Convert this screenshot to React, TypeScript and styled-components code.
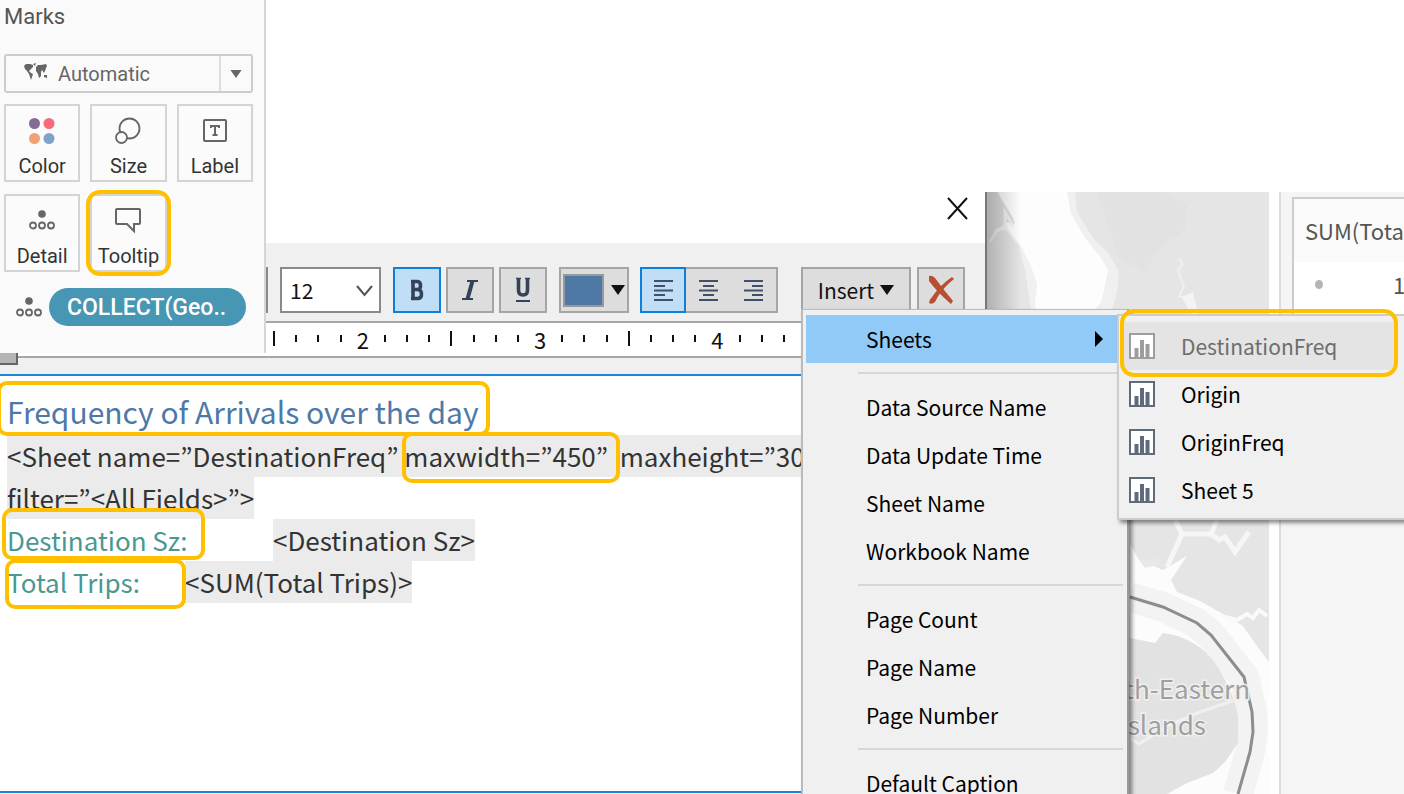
import React from "react";
import styled, { createGlobalStyle, css } from "styled-components";

const GlobalStyle = createGlobalStyle`
  *, *::before, *::after { box-sizing: border-box; }
  body { margin: 0; background: #fff; }
  button, select, input { font: inherit; color: inherit; margin: 0; }
  svg { display: block; }
`;

const uiFont = `"Noto Sans CJK JP", "Open Sans", sans-serif`;
const cardFont = `Roboto, "Open Sans", sans-serif`;

const Page = styled.main`
  position: relative;
  display: grid;
  grid-template-columns: 985fr 284fr 135fr;
  height: 100vh;
  padding-top: 192px;
  overflow: hidden;
  font-family: ${uiFont};
  font-size: 21px;
  color: #111;
`;

/* ---------- highlight frame ---------- */

const Highlight = styled.span<{ $inset: string; $radius?: number }>`
  position: absolute;
  inset: ${(p) => p.$inset};
  border: 4px solid #ffc000;
  border-radius: ${(p) => p.$radius ?? 10}px;
  pointer-events: none;
  z-index: 2;
`;

/* ---------- marks card ---------- */

const MarksCard = styled.section`
  position: absolute;
  top: 0;
  left: 0;
  z-index: 1;
  width: 266px;
  height: 353px;
  padding: 0 11px 0 4px;
  background: #fafafa;
  border-right: 2px solid #d6d6d6;
  font-family: ${cardFont};
  color: #333;
`;

const MarksTitle = styled.h2`
  margin: 0 0 20px;
  font-size: 22px;
  font-weight: 400;
  line-height: 34px;
  color: #555;
`;

const MarkTypeField = styled.label`
  position: relative;
  display: flex;
  height: 39px;
  margin-bottom: 11px;
`;

const MarkTypeSelect = styled.select`
  appearance: none;
  flex: 1;
  padding: 0 40px 0 52px;
  border: 2px solid #ccc;
  border-radius: 3px;
  background: #fafafa;
  font-size: 20px;
  color: #666;
`;

const MarkTypeIcon = styled.span`
  position: absolute;
  left: 20px;
  top: 9px;
`;

const MarkTypeArrow = styled.span`
  position: absolute;
  top: 2px;
  right: 2px;
  bottom: 2px;
  width: 32px;
  display: grid;
  place-items: center;
  border-left: 2px solid #ddd;
  pointer-events: none;
`;

const MarkGrid = styled.div`
  display: grid;
  grid-template-columns: repeat(3, 1fr);
  gap: 12px 10px;
`;

const MarkCell = styled.div`
  position: relative;
  display: grid;
`;

const MarkButton = styled.button`
  display: flex;
  flex-direction: column;
  align-items: center;
  justify-content: space-between;
  height: 78px;
  padding: 10px 0 2px;
  border: 2px solid #d4d4d4;
  background: #fbfbfb;
  font-size: 20px;
  line-height: 24px;
`;

const PillRow = styled.div`
  display: flex;
  align-items: center;
  gap: 7px;
  margin-top: 16px;
  padding-left: 12px;
`;

const Pill = styled.button`
  width: 197px;
  height: 38px;
  padding: 0 18px;
  border: 0;
  border-radius: 19px;
  background: #4796b3;
  color: #fff;
  font-size: 23px;
  font-weight: 500;
  text-align: left;
  white-space: nowrap;
`;

/* ---------- edit dialog ---------- */

const Dialog = styled.section`
  position: relative;
  z-index: 0;
  display: flex;
  flex-direction: column;
  min-width: 0;
  background: #f0f0f0;
`;

const TitleBar = styled.header`
  display: flex;
  justify-content: flex-end;
  align-items: flex-start;
  height: 51px;
  padding: 5px 17px;
  background: #fff;
`;

const CloseButton = styled.button`
  padding: 0;
  border: 0;
  background: none;
`;

const Toolbar = styled.div`
  display: flex;
  height: 78px;
  padding: 24px 20px 8px;
`;

const FontField = styled.input`
  flex: 1;
  min-width: 0;
  border: 2px solid #8a8a8a;
  background: #fff;
`;

const SizeField = styled.label`
  position: relative;
  display: flex;
  width: 101px;
  margin: 0 12px;
`;

const SizeSelect = styled.select`
  appearance: none;
  flex: 1;
  padding: 0 8px;
  border: 2px solid #8a8a8a;
  border-radius: 0;
  background: #fff;
  font-size: 21px;
`;

const SizeArrow = styled.span`
  position: absolute;
  right: 8px;
  top: 18px;
  pointer-events: none;
`;

const ButtonGroup = styled.div<{ $gap?: number; $after?: number }>`
  display: flex;
  gap: ${(p) => p.$gap ?? 0}px;
  margin-right: ${(p) => p.$after ?? 0}px;
`;

const ToolButton = styled.button<{ $active?: boolean; $width?: number }>`
  display: flex;
  align-items: center;
  justify-content: center;
  width: ${(p) => p.$width ?? 48}px;
  padding: 0;
  border: 2px solid #a5a5a5;
  background: #ddd;
  color: #2f3e50;
  ${(p) =>
    p.$active &&
    css`
      border-color: #0f7fdc;
      background: #c0def5;
    `}
`;

const AlignGroup = styled.div`
  display: flex;
  width: 138px;
  margin-right: 23px;
  border: 2px solid #a5a5a5;
  background: #ddd;
`;

const AlignButton = styled.button<{ $active?: boolean }>`
  flex: 1;
  display: grid;
  place-items: center;
  padding: 0;
  border: 0;
  background: none;
  ${(p) =>
    p.$active &&
    css`
      flex: 0 0 46px;
      margin: -2px 0 -2px -2px;
      border: 2px solid #0f7fdc;
      background: #c0def5;
    `}
`;

const Swatch = styled.span`
  width: 41px;
  height: 33px;
  margin-right: 7px;
  border: 2px solid #999;
  background: #4e79a7;
`;

const InsertGroup = styled.div`
  position: relative;
  display: flex;
  margin-right: 6px;
`;

const InsertButton = styled(ToolButton)`
  gap: 6px;
  color: #111;
`;

const Ruler = styled.div`
  height: 37px;
  border: solid #a6a6a6;
  border-width: 2px 0;
  background: #fff;
`;

const RulerScale = styled.div`
  display: grid;
  grid-template-columns: repeat(24, 1fr);
  width: 532px;
  height: 33px;
  margin-left: 263px;
  justify-items: center;
  align-items: center;
  font-size: 22px;
  line-height: 33px;
`;

const Tick = styled.span<{ $major?: boolean }>`
  width: 2px;
  height: ${(p) => (p.$major ? 15 : 7)}px;
  margin-bottom: 3px;
  background: #111;
`;

const RulerThumb = styled.span`
  position: absolute;
  top: 161px;
  left: 0;
  width: 18px;
  height: 12px;
  border: solid #666;
  border-width: 0 2px 2px 0;
  background: #b5b5b5;
`;

const Editor = styled.div`
  flex: 1;
  margin: 16px 0 1px;
  padding: 17px 7px 0;
  overflow: hidden;
  border: solid #1b84dc;
  border-width: 2px 0;
  background: #fff;
  font-size: 26px;
  line-height: 42px;
  color: #333;
  white-space: nowrap;
`;

const Line = styled.p`
  display: flex;
  margin: 0;
  height: 42px;
`;

const TitleLine = styled.h1`
  display: flex;
  margin: 0;
  height: 42px;
  font-size: 30px;
  font-weight: 400;
  line-height: 36px;
  color: #4e79a7;
`;

const Marked = styled.span`
  position: relative;
`;

const Token = styled.span`
  display: inline-block;
  background: #ebebeb;
`;

const Caption = styled.span<{ $width: number }>`
  position: relative;
  width: ${(p) => p.$width}px;
  color: #499894;
`;

/* ---------- menus ---------- */

const Menu = styled.div`
  position: absolute;
  top: 42px;
  left: 0;
  z-index: 3;
  width: 328px;
  height: 500px;
  padding: 5px 2px 0 3px;
  border: solid #bbb;
  border-width: 1px 2px;
  border-right-color: #999;
  background: #f0f0f0;
  box-shadow: 3px 3px 4px rgba(0, 0, 0, 0.45);
  color: #000;
`;

const MenuItem = styled.button<{ $active?: boolean }>`
  display: flex;
  align-items: center;
  width: 100%;
  height: 48px;
  padding: 0 22px 0 60px;
  border: 0;
  background: ${(p) => (p.$active ? "#91c9f7" : "none")};
  text-align: left;
  white-space: nowrap;
`;

const ItemText = styled.span`
  flex: 1;
`;

const Separator = styled.hr`
  height: 2px;
  margin: 9px 2px 9px 52px;
  border: 0;
  background: #d7d7d7;
`;

const SubMenu = styled.div`
  position: absolute;
  top: 4px;
  left: 314px;
  width: 300px;
  padding: 6px 2px 4px;
  border: 2px solid #ccc;
  background: #f0f0f0;
  box-shadow: 3px 3px 4px rgba(0, 0, 0, 0.45);
`;

const SheetItem = styled.button<{ $dim?: boolean }>`
  display: flex;
  align-items: center;
  gap: 26px;
  width: 274px;
  height: 48px;
  padding: 0 8px;
  border: 0;
  background: ${(p) => (p.$dim ? "#e4e4e4" : "none")};
  color: ${(p) => (p.$dim ? "#6d6d6d" : "#000")};
  text-align: left;
`;

/* ---------- map and legend ---------- */

const MapPane = styled.div`
  overflow: hidden;
  background: #e6e6e6;

  svg { width: 100%; height: 100%; }
`;

const LegendPane = styled.aside`
  margin-left: 10px;
  padding: 5px 0 0 11px;
  overflow: hidden;
  border-left: 2px solid #dcdcdc;
  background: #f5f5f5;
`;

const LegendCard = styled.div`
  height: 200px;
  border: solid #ccc;
  border-width: 2px 0 2px 2px;
  background: #fff;
  white-space: nowrap;
  color: #555;
`;

const LegendTitle = styled.h3`
  margin: 0;
  padding-left: 11px;
  background: #fafafa;
  font-size: 22px;
  font-weight: 400;
  line-height: 63px;
`;

const LegendRow = styled.div`
  display: flex;
  align-items: center;
  gap: 70px;
  padding-left: 21px;
  font-size: 22px;
  line-height: 44px;
`;

const Dot = styled.span`
  flex: none;
  width: 8px;
  height: 9px;
  border-radius: 50%;
  background: #b5b5b5;
`;

/* ---------- icons ---------- */

const WorldIcon = () => (
  <svg width="25" height="19" viewBox="0 0 25 19" fill="#666">
    <path d="M0 3 2 1 6 1 9 2 9 4 7 6 5 8 7 10 9 11 8 14 7 17 6 14 5 11 3 8 1 6ZM9 1 12 0 11 3Z" />
    <path d="M12 4 14 2 17 2 22 1 23 3 22 5 21 8 20 10 18 7 17 9 17 13 15 15 14 11 12 8ZM20 12 23 12 23 15 20 14Z" />
  </svg>
);

const ColorIcon = () => (
  <svg width="26" height="30" viewBox="0 0 26 30">
    <circle cx="5.500" cy="7.500" r="5.500" fill="#866b97" />
    <circle cx="20" cy="7.500" r="5.500" fill="#fa6a7c" />
    <circle cx="5.500" cy="22.500" r="5.500" fill="#f1a275" />
    <circle cx="20" cy="22.500" r="5.500" fill="#7ea3c9" />
  </svg>
);

const SizeIcon = () => (
  <svg width="26" height="30" viewBox="0 0 26 30" fill="#fbfbfb" stroke="#666" strokeWidth="1.800">
    <circle cx="14.500" cy="12.500" r="10" />
    <circle cx="6.500" cy="21.500" r="5.500" />
  </svg>
);

const LabelIcon = () => (
  <svg width="24" height="30" viewBox="0 0 24 30" fill="none" stroke="#666" strokeWidth="2">
    <rect x="1" y="4" width="22" height="21" rx="1" />
    <path d="M8 12V10H16V12M12 10V19M9.500 19H14.500" />
  </svg>
);

const DetailIcon = () => (
  <svg width="26" height="28" viewBox="0 0 26 28" fill="none" stroke="#666" strokeWidth="1.800">
    <circle cx="13" cy="8" r="3.800" fill="#666" stroke="none" />
    <circle cx="4" cy="19.500" r="3" />
    <circle cx="13" cy="19.500" r="3" />
    <circle cx="22" cy="19.500" r="3" />
  </svg>
);

const TooltipIcon = () => (
  <svg width="26" height="28" viewBox="0 0 26 28" fill="none" stroke="#666" strokeWidth="2">
    <path d="M2 3H24Q25 3 25 4V17Q25 18 24 18H19V25L12 18H2Q1 18 1 17V4Q1 3 2 3Z" />
  </svg>
);

const DownTriangle = ({ color = "#111", size = 14 }) => (
  <svg width={size} height={size - 4} viewBox="0 0 14 10" fill={color}>
    <path d="M0 0H14L7 10Z" />
  </svg>
);

const BoldIcon = () => (
  <svg width="14" height="22" viewBox="0 0 14 22" fill="none" stroke="#34435a" strokeWidth="3.600">
    <path d="M3 2.500V19.500M1 2.500H7.500Q10.500 2.500 10.500 6.500T7.500 10.500H3M7.500 10.500Q11.500 10.500 11.500 15T7.500 19.500H1" />
  </svg>
);

const ItalicIcon = () => (
  <svg width="18" height="22" viewBox="0 0 18 22" fill="none" stroke="#34435a" strokeWidth="2">
    <path d="M6 2H17M1 20H12" />
    <path d="M11.500 2 6.500 20" strokeWidth="4" />
  </svg>
);

const UnderlineIcon = () => (
  <svg width="16" height="26" viewBox="0 0 16 26" fill="none" stroke="#34435a" strokeWidth="3.600">
    <path d="M3.500 1V13Q3.500 18 8 18T12.500 13V1" />
    <path d="M1 24H15" strokeWidth="2" />
    <path d="M1 1.500H6M10 1.500H15" strokeWidth="1.500" />
  </svg>
);

const alignPaths = {
  left: "M0 1H19M0 6H11M0 10.500H19M0 15H11M0 20H19",
  center: "M0 1H19M4 6H15M0 10.500H19M4 15H15M0 20H19",
  right: "M0 1H19M8 6H19M0 10.500H19M8 15H19M0 20H19",
};

const AlignIcon = ({ kind }: { kind: keyof typeof alignPaths }) => (
  <svg width="19" height="21" viewBox="0 0 19 21" stroke="#3f5068" strokeWidth="2">
    <path d={alignPaths[kind]} />
  </svg>
);

const ClearIcon = () => (
  <svg width="26" height="30" viewBox="0 0 26 30" fill="#b84f30">
    <path d="M1 1Q4 0 7 3Q15 14 25 26L23 29Q10 18 1 6Z" />
    <path d="M24 2 26 4Q13 14 7 27Q4 30 1 28Q1 25 4 22Q12 10 24 2Z" />
  </svg>
);

const CloseIcon = () => (
  <svg width="21" height="23" viewBox="0 0 21 23" stroke="#111" strokeWidth="2">
    <path d="M1 1 20 22M20 1 1 22" />
  </svg>
);

const SheetIcon = ({ dim = false }) => {
  const tone = dim ? "#9d9d9d" : "#5f6b7a";
  return (
    <svg width="26" height="26" viewBox="0 0 26 26">
      <rect x="1" y="1" width="24" height="24" fill="#fff" stroke={tone} strokeWidth="2" />
      <path d="M7.500 24V15M13 24V7M18.500 24V11" stroke={tone} strokeWidth="4" />
    </svg>
  );
};

const coastLine = "M145 405 178 415 212 431 226 443 259 485 267 520 268 540 265 560 253 602";

const MapDrawing = () => (
  <svg viewBox="0 0 284 602" preserveAspectRatio="xMinYMin slice" role="img" aria-label="Map">
    <defs>
      <linearGradient id="edge" x1="0" x2="1">
        <stop offset="0" stopColor="#000" stopOpacity="0.24" />
        <stop offset="1" stopColor="#000" stopOpacity="0" />
      </linearGradient>
    </defs>
    <rect width="284" height="602" fill="#e5e5e5" />
    <path d="M8 0H90L92 20 108 46 124 62 134 80 132 100 124 130H48L44 105 40 78 34 54 20 38 5 42V28L20 26Z" fill="#f0f0f0" />
    <path d="M14 0H82L86 22 100 46 116 66 123 78 119 98 116 110 110 118V140H58L50 112 52 92 46 74 36 54 22 36Z" fill="#fdfdfd" />
    <path d="M3 0 12 0 28 26 30 32 20 30 3 50Z" fill="#dedede" />
    <path d="M5 50 12 38 20 36 20 20 28 34" fill="none" stroke="#f3f3f3" strokeWidth="3" />
    <path d="M180 0 202 12 200 38 174 56 160 80 134 66 112 0Z" fill="#e2e2e2" />
    <path d="M194 66 198 72 193 78 199 94 194 104 204 106 212 126" fill="none" stroke="#f0f0f0" strokeWidth="2" />
    <path d="M197 105 208 100 214 126H208Z" fill="#f3f3f3" />
    {/* channels running north of the bay */}
    <path d="M182 375 197 342H226L234 348 240 345 250 360 264 340M197 342 190 328M226 342 232 328" fill="none" stroke="#f6f6f6" strokeWidth="5" />
    {/* open water */}
    <path d="M145 352 154 368 178 378 202 364 186 388 192 400 215 409 238 422 258 434 272 454 284 470V602H145Z" fill="#fcfcfc" />
    <path d="M154 368 172 366 176 372 160 376Z" fill="#e8e8e8" />
    <path d="M236 424 252 428 262 422 268 426 274 418 282 424" fill="none" stroke="#fafafa" strokeWidth="4" />
    <path d={coastLine} fill="none" stroke="#f3f3f3" strokeWidth="30" />
    <path d="M145 446 170 451 178 441Q214 446 232 474T253 525V551L240 570 228 581 202 591 182 602H145Z" fill="#e2e2e2" />
    <path d="M145 546 154 552 182 534 215 520 250 508" fill="none" stroke="#f0f0f0" strokeWidth="3" />
    <path d={coastLine} fill="none" stroke="#8d8d8d" strokeWidth="3" />
    <g fontFamily={uiFont} fontSize="26" fill="#a0a0a0" stroke="#f0f0f0" strokeWidth="3" paintOrder="stroke" textAnchor="end">
      <text x="265" y="507">th-Eastern</text>
      <text x="221" y="543">Islands</text>
    </g>
    <rect width="36" height="602" fill="url(#edge)" />
    <rect width="2" height="602" fill="#777" />
  </svg>
);

/* ---------- data ---------- */

const marks = [
  { name: "Color", icon: <ColorIcon /> },
  { name: "Size", icon: <SizeIcon /> },
  { name: "Label", icon: <LabelIcon /> },
  { name: "Detail", icon: <DetailIcon /> },
  { name: "Tooltip", icon: <TooltipIcon />, highlighted: true },
];

const menuGroups = [
  ["Data Source Name", "Data Update Time", "Sheet Name", "Workbook Name"],
  ["Page Count", "Page Name", "Page Number"],
  ["Default Caption"],
];

const sheets = ["DestinationFreq", "Origin", "OriginFreq", "Sheet 5"];

const rulerCells = Array.from({ length: 24 }, (_, i) => i);

export default function App() {
  return (
    <>
      <GlobalStyle />
      <Page>
        <MarksCard>
          <MarksTitle>Marks</MarksTitle>
          <MarkTypeField>
            <MarkTypeSelect aria-label="Mark type" defaultValue="Automatic">
              <option>Automatic</option>
            </MarkTypeSelect>
            <MarkTypeIcon><WorldIcon /></MarkTypeIcon>
            <MarkTypeArrow><DownTriangle color="#666" size={12} /></MarkTypeArrow>
          </MarkTypeField>
          <MarkGrid>
            {marks.map((m) => (
              <MarkCell key={m.name}>
                <MarkButton>
                  {m.icon}
                  {m.name}
                </MarkButton>
                {m.highlighted && <Highlight $inset="-4px -4px -4px -4px" $radius={14} />}
              </MarkCell>
            ))}
          </MarkGrid>
          <PillRow>
            <DetailIcon />
            <Pill>COLLECT(Geo..</Pill>
          </PillRow>
        </MarksCard>

        <Dialog>
          <TitleBar>
            <CloseButton aria-label="Close"><CloseIcon /></CloseButton>
          </TitleBar>
          <Toolbar>
            <FontField aria-label="Font" />
            <SizeField>
              <SizeSelect aria-label="Font size" defaultValue="12">
                <option>12</option>
              </SizeSelect>
              <SizeArrow>
                <svg width="17" height="12" viewBox="0 0 17 12" fill="none" stroke="#555" strokeWidth="2">
                  <path d="M1 1 8.500 10 16 1" />
                </svg>
              </SizeArrow>
            </SizeField>
            <ButtonGroup $gap={5} $after={12}>
              <ToolButton $active aria-label="Bold"><BoldIcon /></ToolButton>
              <ToolButton aria-label="Italic"><ItalicIcon /></ToolButton>
              <ToolButton aria-label="Underline"><UnderlineIcon /></ToolButton>
            </ButtonGroup>
            <ButtonGroup $after={11}>
              <ToolButton $width={70} aria-label="Text color">
                <Swatch />
                <DownTriangle />
              </ToolButton>
            </ButtonGroup>
            <AlignGroup>
              <AlignButton $active aria-label="Align left"><AlignIcon kind="left" /></AlignButton>
              <AlignButton aria-label="Align center"><AlignIcon kind="center" /></AlignButton>
              <AlignButton aria-label="Align right"><AlignIcon kind="right" /></AlignButton>
            </AlignGroup>
            <InsertGroup>
              <InsertButton $width={110}>
                Insert
                <DownTriangle />
              </InsertButton>
              <Menu>
                <MenuItem $active>
                  <ItemText>Sheets</ItemText>
                  <svg width="8" height="16" viewBox="0 0 8 16"><path d="M0 0 8 8 0 16Z" /></svg>
                </MenuItem>
                {menuGroups.map((group) => (
                  <React.Fragment key={group[0]}>
                    <Separator />
                    {group.map((name) => (
                      <MenuItem key={name}>{name}</MenuItem>
                    ))}
                  </React.Fragment>
                ))}
                <SubMenu>
                  {sheets.map((name, i) => (
                    <SheetItem key={name} $dim={i === 0}>
                      <SheetIcon dim={i === 0} />
                      {name}
                    </SheetItem>
                  ))}
                  <Highlight $inset="-7px 17px 141px 1px" $radius={14} />
                </SubMenu>
              </Menu>
            </InsertGroup>
            <ToolButton aria-label="Clear"><ClearIcon /></ToolButton>
          </Toolbar>
          <Ruler>
            <RulerScale>
              {rulerCells.map((i) =>
                i % 8 === 4 ? <span key={i}>{2 + (i - 4) / 8}</span> : <Tick key={i} $major={i % 8 === 0} />
              )}
            </RulerScale>
          </Ruler>
          <RulerThumb />
          <Editor>
            <TitleLine>
              <Marked>
                Frequency of Arrivals over the day
                <Highlight $inset="-12px -11px -1px -10px" />
              </Marked>
            </TitleLine>
            <Line>
              <Token>&lt;Sheet name=”DestinationFreq”&nbsp;</Token>
              <Marked>
                <Token>maxwidth=”450”&nbsp;</Token>
                <Highlight $inset="-3px -6px -6px -2px" />
              </Marked>
              <Token>&nbsp;maxheight=”300”</Token>
            </Line>
            <Line>
              <Token>filter=”&lt;All Fields&gt;”&gt;</Token>
            </Line>
            <Line>
              <Caption $width={266}>
                Destination Sz:
                <Highlight $inset="-11px 68px 1px -5px" />
              </Caption>
              <Token>&lt;Destination Sz&gt;</Token>
            </Line>
            <Line>
              <Caption $width={178}>
                Total Trips:
                <Highlight $inset="-2px -1px -6px -2px" />
              </Caption>
              <Token>&lt;SUM(Total Trips)&gt;</Token>
            </Line>
          </Editor>
        </Dialog>

        <MapPane>
          <MapDrawing />
        </MapPane>

        <LegendPane>
          <LegendCard>
            <LegendTitle>SUM(Total</LegendTitle>
            <LegendRow>
              <Dot />1
            </LegendRow>
          </LegendCard>
        </LegendPane>
      </Page>
    </>
  );
}
